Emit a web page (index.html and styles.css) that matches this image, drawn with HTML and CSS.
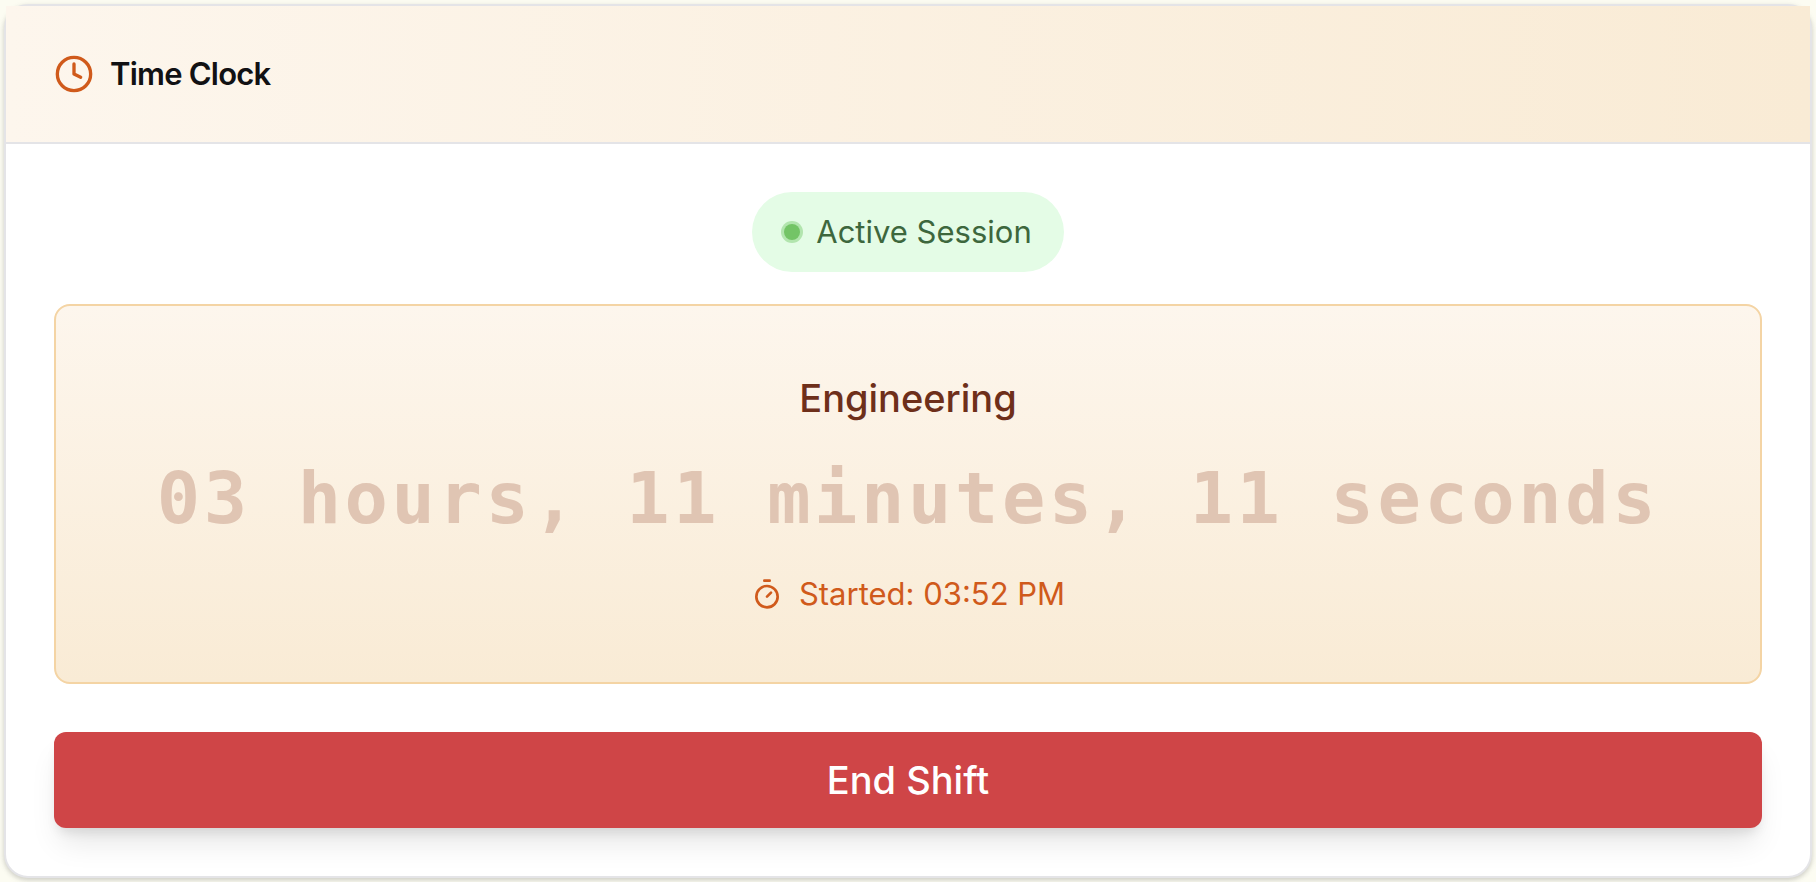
FILE: index.html
```html
<!DOCTYPE html>
<html lang="en">
<head>
<meta charset="utf-8">
<title>Time Clock</title>
<link rel="stylesheet" href="styles.css">
</head>
<body>
<main class="card">
  <header class="card-header">
    <svg class="icon-clock" viewBox="0 0 24 24" aria-hidden="true"><circle cx="12" cy="12" r="10"/><path d="M12 6v6l4 2"/></svg>
    <h1 class="title">Time Clock</h1>
  </header>
  <div class="card-body">
    <div class="status"><span class="dot"></span><span>Active Session</span></div>
    <section class="session">
      <h2 class="department">Engineering</h2>
      <div class="elapsed">03 hours, 11 minutes, 11 seconds</div>
      <div class="started">
        <svg class="icon-timer" viewBox="0 0 24 24" aria-hidden="true"><path d="M10 2h4"/><path d="m12 14 3-3"/><circle cx="12" cy="14" r="8"/></svg>
        <span>Started: 03:52 PM</span>
      </div>
    </section>
    <button class="end-shift" type="button">End Shift</button>
  </div>
</main>
</body>
</html>
```

FILE: styles.css
```css
* {
  box-sizing: border-box;
}

body {
  margin: 0;
  padding: 4px;
  background: #fcfcf2;
  font-family: Inter, "Liberation Sans", sans-serif;
  font-size: 31px;
  line-height: 48px;
}

.card {
  border: 2px solid #e4e4e7;
  border-radius: 24px;
  background: #fff;
  box-shadow: 0 2px 6px rgba(0, 0, 0, 0.1), 0 2px 4px rgba(0, 0, 0, 0.1);
}

.card-header {
  display: flex;
  align-items: center;
  gap: 16px;
  padding: 48px;
  border-bottom: 2px solid #e4e4e7;
  background: linear-gradient(to right, #fdf6ed, #f9ebd5);
}

.icon-clock,
.icon-timer {
  flex: none;
  fill: none;
  stroke: #d05a1b;
  stroke-width: 2;
  stroke-linecap: round;
  stroke-linejoin: round;
}

.icon-clock {
  width: 40px;
  height: 40px;
}

.icon-timer {
  width: 32px;
  height: 32px;
}

.title {
  margin: 0;
  color: #111113;
  font-size: 31px;
  font-weight: 600;
  line-height: 40px;
  letter-spacing: -0.025em;
}

.card-body {
  display: flex;
  flex-direction: column;
  align-items: center;
  padding: 48px;
}

.status {
  display: flex;
  align-items: center;
  gap: 16px;
  margin-bottom: 32px;
  padding: 16px 32px;
  border-radius: 40px;
  background: #e4fce6;
  color: #3d673d;
}

.dot {
  width: 16px;
  height: 16px;
  border-radius: 50%;
  background: #73c466;
  box-shadow: 0 0 0 3px #b2e5ae;
}

.session {
  display: flex;
  flex-direction: column;
  align-items: center;
  gap: 16px;
  width: 100%;
  margin-bottom: 48px;
  padding: 64px;
  border: 2px solid #f4d4a4;
  border-radius: 16px;
  background: linear-gradient(to bottom, #fdf6ed, #f9ebd5);
  text-align: center;
}

.department {
  margin: 0;
  color: #6e2f1a;
  font-size: 38px;
  font-weight: 500;
  line-height: 56px;
}

.elapsed {
  color: #e0c5b3;
  font-family: "DejaVu Sans Mono", monospace;
  font-size: 72px;
  font-weight: 700;
  line-height: 112px;
  letter-spacing: 0.05em;
}

.started {
  display: flex;
  align-items: center;
  gap: 16px;
  color: #d05a1b;
}

.end-shift {
  width: 100%;
  height: 96px;
  border: 0;
  border-radius: 12px;
  background: #cf4547;
  box-shadow: 0 20px 30px -6px rgba(0, 0, 0, 0.1), 0 8px 12px -4px rgba(0, 0, 0, 0.1);
  color: #fff;
  font-family: inherit;
  font-size: 38px;
  font-weight: 500;
  line-height: 56px;
  cursor: pointer;
}
```
